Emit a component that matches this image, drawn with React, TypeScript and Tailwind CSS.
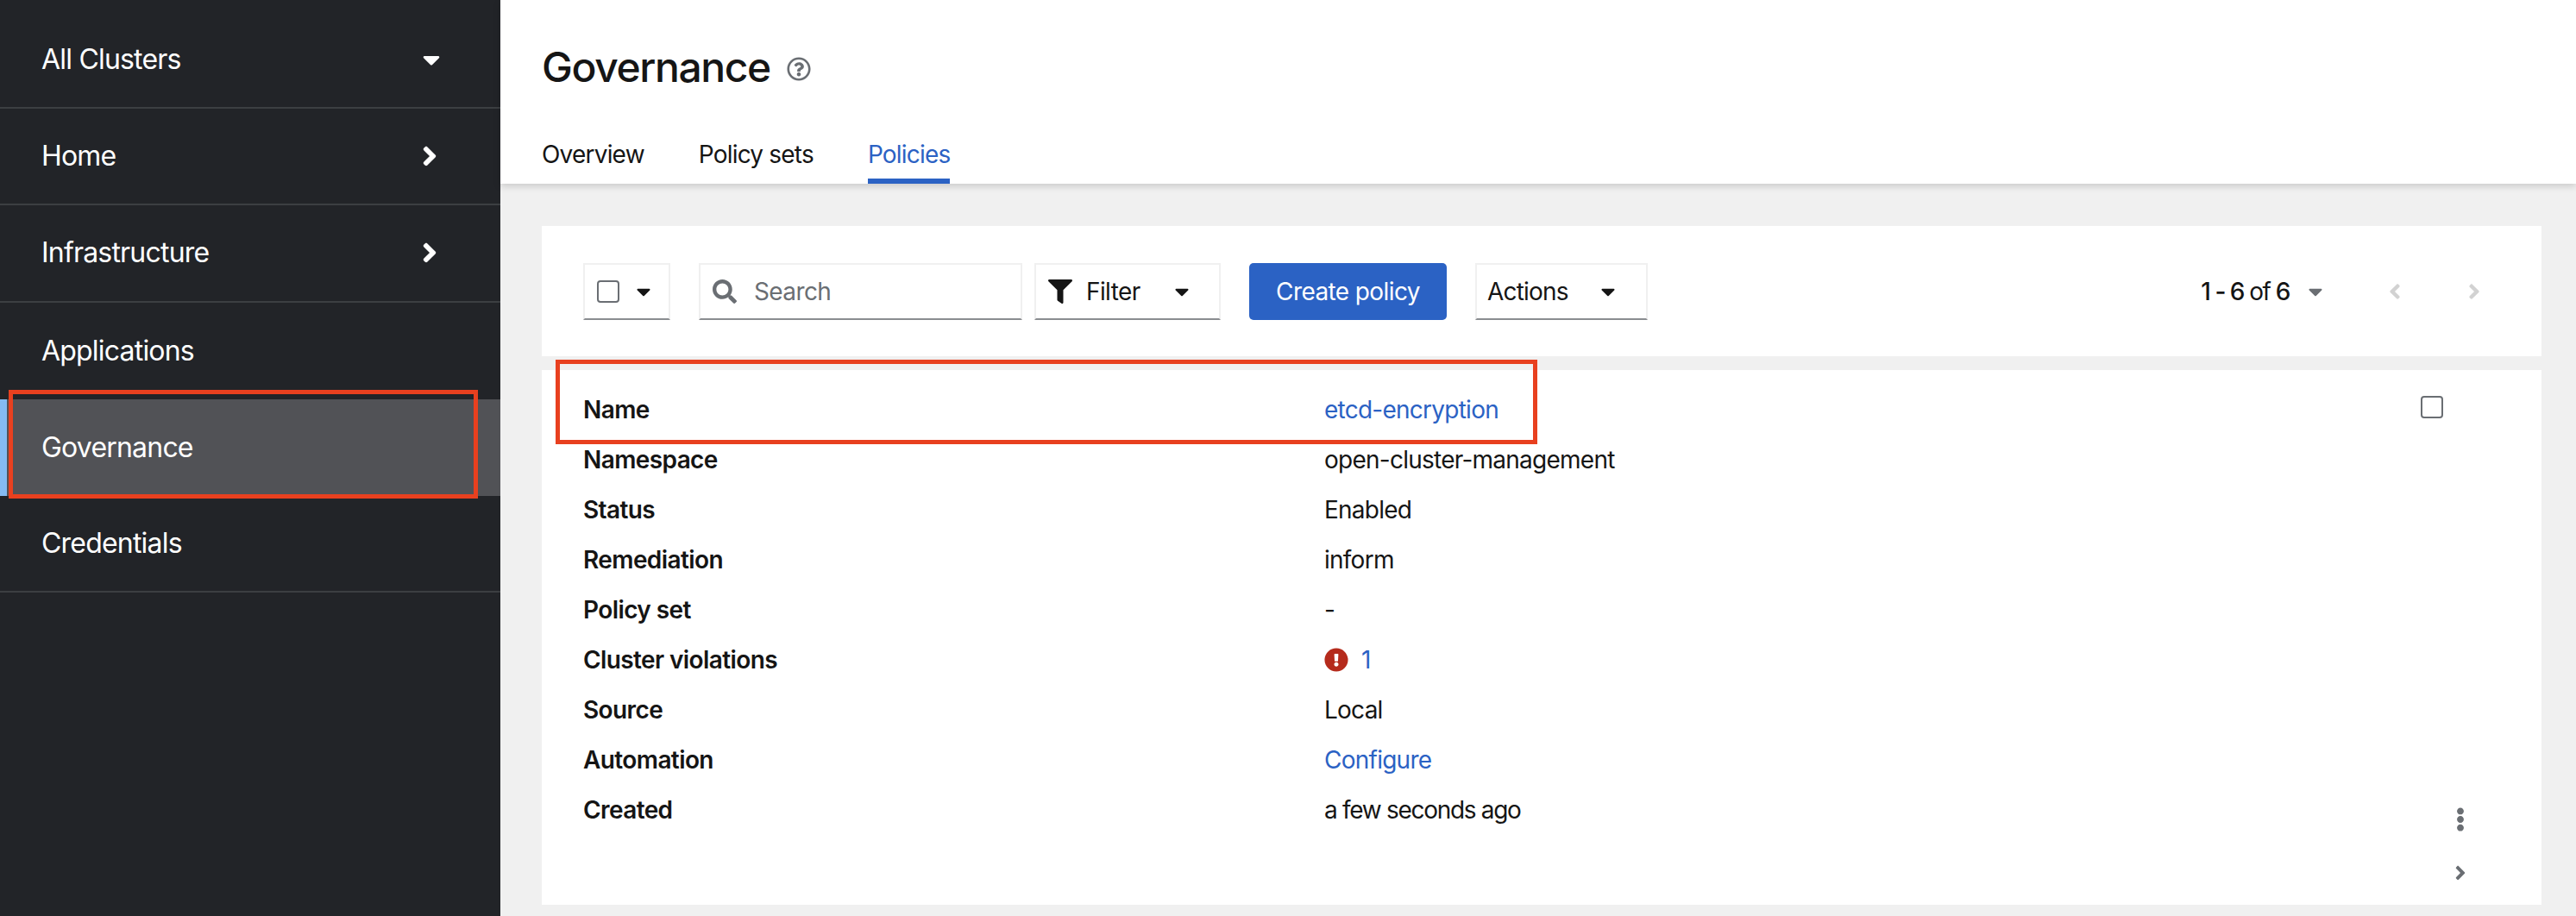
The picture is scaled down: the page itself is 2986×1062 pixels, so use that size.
import React from "react";
import { FaAngleRight, FaAngleLeft, FaCaretDown, FaFilter, FaSearch, FaEllipsisV, FaExclamationCircle, FaRegQuestionCircle } from "react-icons/fa";

const nav: { label: string; icon?: "down" | "right"; active?: boolean }[] = [
  { label: "All Clusters", icon: "down" },
  { label: "Home", icon: "right" },
  { label: "Infrastructure", icon: "right" },
  { label: "Applications" },
  { label: "Governance", active: true },
  { label: "Credentials" },
];

const rows: { k: string; v: React.ReactNode }[] = [
  { k: "Name", v: <span className="text-[#2b62c4]">etcd-encryption</span> },
  { k: "Namespace", v: "open-cluster-management" },
  { k: "Status", v: "Enabled" },
  { k: "Remediation", v: "inform" },
  { k: "Policy set", v: "-" },
  {
    k: "Cluster violations",
    v: (
      <span className="flex items-center gap-[15px] text-[#2b62c4]">
        <FaExclamationCircle className="text-[#b52b1c] w-[28px] h-[28px]" />1
      </span>
    ),
  },
  { k: "Source", v: "Local" },
  { k: "Automation", v: <span className="text-[#2b62c4]">Configure</span> },
  { k: "Created", v: <span className="tracking-[-1.3px]">a few seconds ago</span> },
];

const control = "h-[66px] flex items-center border-2 border-[#f0f0f0] border-b-[#8a8d90] bg-white";

export default function App() {
  return (
    <div className="flex h-[1062px] w-[2986px] overflow-hidden bg-[#f0f0f0] text-[28px] text-[#151515] font-['Inter','Liberation_Sans',sans-serif] tracking-[-0.6px]">
      <aside className="w-[580px] shrink-0 bg-[#222428] text-white text-[32px] tracking-[-0.8px] relative pt-[14px]">
        {nav.map((n) => (
          <div
            key={n.label}
            className={
              "h-[112.2px] flex items-center justify-between pl-[48px] pr-[66px] " +
              (n.active
                ? "bg-[#515256] border-l-[8px] border-[#85bbf2] !pl-[40px]"
                : n.label === "Applications"
                ? ""
                : "border-b-2 border-[#3c3f42]")
            }
          >
            <span>{n.label}</span>
            {n.icon === "down" && <FaCaretDown className="w-[24px] h-[32px] mr-[2px]" />}
            {n.icon === "right" && <FaAngleRight className="w-[26px] h-[36px] mr-[3px]" />}
          </div>
        ))}
        <div className="absolute left-[10px] top-[452px] w-[544px] h-[126px] border-[5px] border-[#e8401f]" />
      </aside>

      <main className="flex-1 flex flex-col min-w-0 relative">
        <header className="h-[213px] bg-white shadow-[0_3px_8px_rgba(0,0,0,0.16)] pl-[48px] flex flex-col relative z-10">
          <div className="flex items-center gap-[19px] pt-[28px] h-[128px]">
            <h1 className="text-[48px] font-medium tracking-[-1.4px] leading-none">Governance</h1>
            <FaRegQuestionCircle className="w-[28px] h-[28px] text-[#6a6e73] mt-[4px]" />
          </div>
          <nav className="flex gap-[63px] mt-auto tracking-[-0.8px]">
            <div className="h-[85px] pt-[34px] leading-[34px]">Overview</div>
            <div className="h-[85px] pt-[34px] leading-[34px]">Policy sets</div>
            <div className="h-[85px] pt-[34px] leading-[34px] text-[#2b62c4] border-b-[6px] border-[#2b62c4]">Policies</div>
          </nav>
        </header>

        <div className="flex-1 pl-[48px] pr-[40px] pt-[49px] pb-[13px] flex flex-col gap-[16px]">
          <section className="h-[151px] bg-white flex items-center pl-[48px] pr-[68px]">
            <div className={control + " w-[101px] pl-[14px] gap-[18px]"}>
              <span className="w-[26px] h-[26px] rounded-[4px] border-2 border-[#6a6e73]" />
              <FaCaretDown className="w-[20px] h-[26px]" />
            </div>
            <div className={control + " w-[375px] ml-[33px] pl-[14px] gap-[20px] text-[#6a6e73]"}>
              <FaSearch className="w-[28px] h-[28px]" />
              <span>Search</span>
            </div>
            <div className={control + " w-[216px] ml-[14px] pl-[14px] gap-[16px]"}>
              <FaFilter className="w-[28px] h-[28px]" />
              <span>Filter</span>
              <FaCaretDown className="w-[20px] h-[26px] ml-[22px]" />
            </div>
            <div className="h-[66px] w-[229px] ml-[33px] rounded-[5px] bg-[#2b62c4] text-white flex items-center justify-center">Create policy</div>
            <div className={control + " w-[200px] ml-[33px] pl-[12px] justify-between pr-[34px] tracking-[-0.8px]"}>
              <span>Actions</span>
              <FaCaretDown className="w-[20px] h-[26px]" />
            </div>
            <div className="ml-auto flex items-center">
              <span className="tracking-[-1.5px]">
                <b className="font-medium">1 - 6</b> of <b className="font-medium">6</b>
              </span>
              <FaCaretDown className="w-[20px] h-[26px] ml-[20px] text-[#6a6e73]" />
              <FaAngleLeft className="w-[20px] h-[28px] ml-[72px] text-[#d2d2d2]" />
              <FaAngleRight className="w-[20px] h-[28px] ml-[72px] text-[#d2d2d2]" />
            </div>
          </section>

          <section className="flex-1 bg-white flex">
            <div className="flex-1 pl-[48px] pt-[17px]">
              {rows.map((r) => (
                <div key={r.k} className="h-[58px] flex items-center">
                  <div className="w-[859px] font-semibold">{r.k}</div>
                  <div className="tracking-[-0.75px]">{r.v}</div>
                </div>
              ))}
            </div>
            <div className="w-[140px] flex flex-col">
              <span className="w-[26px] h-[26px] rounded-[4px] border-2 border-[#6a6e73] mt-[30px]" />
              <FaEllipsisV className="w-[28px] h-[28px] text-[#6a6e73] mt-[451px] ml-[32px]" />
              <FaAngleRight className="w-[18px] h-[26px] text-[#6a6e73] mt-[35px] ml-[37px]" />
            </div>
          </section>
        </div>
        <div className="absolute left-[64px] top-[417px] w-[1138px] h-[98px] border-[5px] border-[#e8401f] z-20" />
      </main>
    </div>
  );
}
